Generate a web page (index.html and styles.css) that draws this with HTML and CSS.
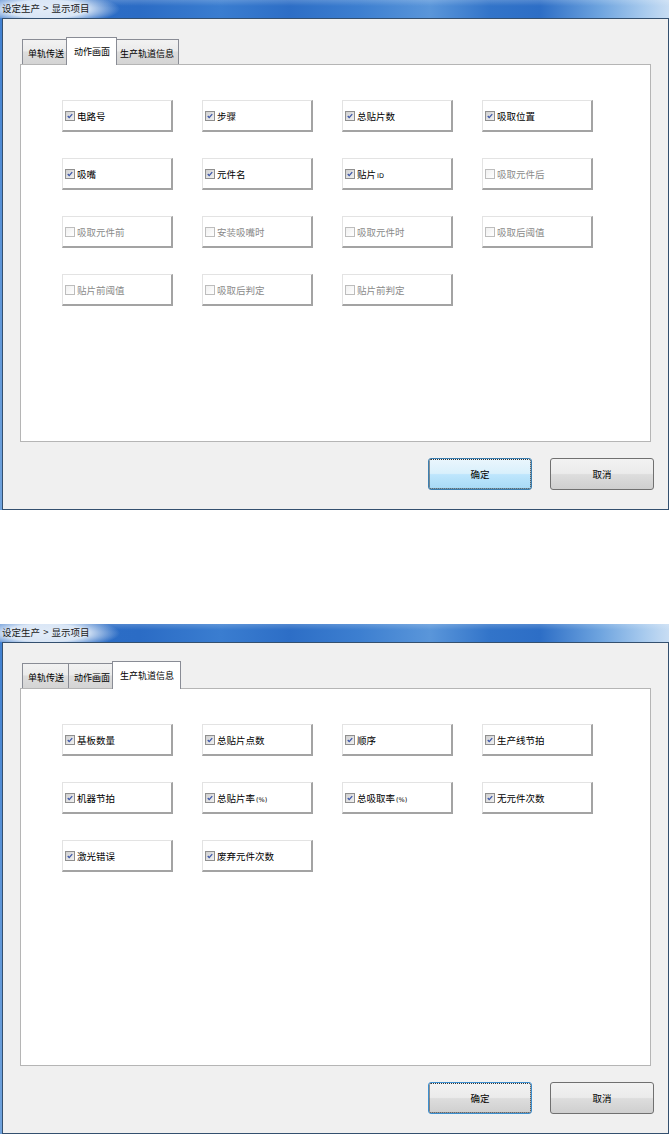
FILE: index.html
```html
<!DOCTYPE html>
<html lang="zh-CN">
<head>
<meta charset="utf-8">
<title>显示项目</title>
<link rel="stylesheet" href="styles.css">
</head>
<body>
<div class="window">
  <div class="titlebar"><span class="title">设定生产 <span class="sep">&gt;</span> 显示项目</span></div>
  <div class="client">
    <div class="tabs">
      <div class="tab">单轨传送</div>
      <div class="tab active">动作画面</div>
      <div class="tab">生产轨道信息</div>
    </div>
    <div class="panel">
      <div class="grid">
        <label class="item"><span class="cb on"><svg viewBox="0 0 10 10"><polyline points="2.2,5 4,7 7.8,2.6"/></svg></span><span class="lbl">电路号</span></label>
        <label class="item"><span class="cb on"><svg viewBox="0 0 10 10"><polyline points="2.2,5 4,7 7.8,2.6"/></svg></span><span class="lbl">步骤</span></label>
        <label class="item"><span class="cb on"><svg viewBox="0 0 10 10"><polyline points="2.2,5 4,7 7.8,2.6"/></svg></span><span class="lbl">总贴片数</span></label>
        <label class="item"><span class="cb on"><svg viewBox="0 0 10 10"><polyline points="2.2,5 4,7 7.8,2.6"/></svg></span><span class="lbl">吸取位置</span></label>
        <label class="item"><span class="cb on"><svg viewBox="0 0 10 10"><polyline points="2.2,5 4,7 7.8,2.6"/></svg></span><span class="lbl">吸嘴</span></label>
        <label class="item"><span class="cb on"><svg viewBox="0 0 10 10"><polyline points="2.2,5 4,7 7.8,2.6"/></svg></span><span class="lbl">元件名</span></label>
        <label class="item"><span class="cb on"><svg viewBox="0 0 10 10"><polyline points="2.2,5 4,7 7.8,2.6"/></svg></span><span class="lbl">贴片<span class="small">ID</span></span></label>
        <label class="item disabled"><span class="cb"></span><span class="lbl">吸取元件后</span></label>
        <label class="item disabled"><span class="cb"></span><span class="lbl">吸取元件前</span></label>
        <label class="item disabled"><span class="cb"></span><span class="lbl">安装吸嘴时</span></label>
        <label class="item disabled"><span class="cb"></span><span class="lbl">吸取元件时</span></label>
        <label class="item disabled"><span class="cb"></span><span class="lbl">吸取后阈值</span></label>
        <label class="item disabled"><span class="cb"></span><span class="lbl">贴片前阈值</span></label>
        <label class="item disabled"><span class="cb"></span><span class="lbl">吸取后判定</span></label>
        <label class="item disabled"><span class="cb"></span><span class="lbl">贴片前判定</span></label>
      </div>
    </div>
    <div class="actions">
      <button class="btn default">确定</button>
      <button class="btn">取消</button>
    </div>
  </div>
</div>

<div class="window">
  <div class="titlebar"><span class="title">设定生产 <span class="sep">&gt;</span> 显示项目</span></div>
  <div class="client">
    <div class="tabs">
      <div class="tab">单轨传送</div>
      <div class="tab">动作画面</div>
      <div class="tab active">生产轨道信息</div>
    </div>
    <div class="panel">
      <div class="grid">
        <label class="item"><span class="cb on"><svg viewBox="0 0 10 10"><polyline points="2.2,5 4,7 7.8,2.6"/></svg></span><span class="lbl">基板数量</span></label>
        <label class="item"><span class="cb on"><svg viewBox="0 0 10 10"><polyline points="2.2,5 4,7 7.8,2.6"/></svg></span><span class="lbl">总贴片点数</span></label>
        <label class="item"><span class="cb on"><svg viewBox="0 0 10 10"><polyline points="2.2,5 4,7 7.8,2.6"/></svg></span><span class="lbl">顺序</span></label>
        <label class="item"><span class="cb on"><svg viewBox="0 0 10 10"><polyline points="2.2,5 4,7 7.8,2.6"/></svg></span><span class="lbl">生产线节拍</span></label>
        <label class="item"><span class="cb on"><svg viewBox="0 0 10 10"><polyline points="2.2,5 4,7 7.8,2.6"/></svg></span><span class="lbl">机器节拍</span></label>
        <label class="item"><span class="cb on"><svg viewBox="0 0 10 10"><polyline points="2.2,5 4,7 7.8,2.6"/></svg></span><span class="lbl">总贴片率<span class="small">(%)</span></span></label>
        <label class="item"><span class="cb on"><svg viewBox="0 0 10 10"><polyline points="2.2,5 4,7 7.8,2.6"/></svg></span><span class="lbl">总吸取率<span class="small">(%)</span></span></label>
        <label class="item"><span class="cb on"><svg viewBox="0 0 10 10"><polyline points="2.2,5 4,7 7.8,2.6"/></svg></span><span class="lbl">无元件次数</span></label>
        <label class="item"><span class="cb on"><svg viewBox="0 0 10 10"><polyline points="2.2,5 4,7 7.8,2.6"/></svg></span><span class="lbl">激光错误</span></label>
        <label class="item"><span class="cb on"><svg viewBox="0 0 10 10"><polyline points="2.2,5 4,7 7.8,2.6"/></svg></span><span class="lbl">废弃元件次数</span></label>
      </div>
    </div>
    <div class="actions">
      <button class="btn focus">确定</button>
      <button class="btn">取消</button>
    </div>
  </div>
</div>
</body>
</html>
```
FILE: styles.css
```css
* { box-sizing: border-box; }

html, body { overflow: hidden; }

body {
  margin: 0;
  background: #ffffff;
  font-family: "Noto Sans CJK SC", "Liberation Sans", sans-serif;
  font-size: 9px;
  color: #000;
}

.window {
  width: 669px;
  height: 510px;
  display: flex;
  flex-direction: column;
  background: linear-gradient(180deg, #3f7fd0 0%, #5d95d8 50%, #6fa2dc 100%);
}

.window + .window {
  margin-top: 114px;
}

.titlebar {
  height: 18px;
  flex: none;
  display: flex;
  align-items: center;
  padding-left: 2px;
  background:
    radial-gradient(ellipse 74px 16px at 46px 9px, rgba(226,236,248,1) 0%, rgba(226,236,248,0.95) 55%, rgba(226,236,248,0) 100%),
    linear-gradient(180deg, rgba(255,255,255,0.18) 0, rgba(255,255,255,0) 6px),
    linear-gradient(90deg, #2e6fc7 0, #2b6cc5 140px, #3a7dd0 220px, #2d6ec6 290px, #3d7fd0 360px, #5a96da 430px, #3274c9 490px, #2d6ec6 540px, #6ea4df 600px, #a9cbee 645px, #c8ddf3 669px);
}

.title {
  color: #1b1b1b;
  font-size: 9.5px;
  line-height: 1;
  white-space: nowrap;
}

.sep {
  margin: 0 1px;
}

.client {
  flex: 1;
  margin-left: 2px;
  border: 1px solid #34506f;
  background: #f0f0f0;
  padding: 18px 0 0 17px;
  display: flex;
  flex-direction: column;
}

.tabs {
  display: flex;
  align-items: flex-end;
  height: 27px;
  padding-left: 2px;
}

.tab {
  height: 25px;
  padding: 2px 4px 0 5px;
  border: 1px solid #898c95;
  border-bottom: none;
  margin-left: -1px;
  background: linear-gradient(180deg, #f2f2f2 0%, #ebebeb 45%, #dddddd 50%, #d4d4d4 100%);
  display: flex;
  align-items: center;
  font-size: 9px;
  white-space: nowrap;
}

.tab:first-child { margin-left: 0; }

.tab.active {
  height: 28px;
  margin: 0 -2px -1px -3px;
  padding: 0 6px 0 7px;
  background: #ffffff;
  position: relative;
  z-index: 1;
}

.panel {
  width: 631px;
  height: 378px;
  border: 1px solid #b5b5b5;
  background: #ffffff;
  padding: 35px 0 0 41px;
}

.grid {
  display: grid;
  grid-template-columns: repeat(4, 111px);
  grid-auto-rows: 32px;
  column-gap: 29px;
  row-gap: 26px;
}

.item {
  display: flex;
  align-items: center;
  padding-left: 2px;
  padding-top: 1px;
  background: #ffffff;
  border-top: 1px solid #e3e3e3;
  border-left: 1px solid #e3e3e3;
  border-right: 2px solid #a3a3a3;
  border-bottom: 2px solid #a3a3a3;
  font-size: 9.5px;
  white-space: nowrap;
}

.cb {
  width: 10px;
  height: 10px;
  flex: none;
  border: 1px solid #bdbdbd;
  background: linear-gradient(135deg, #f0f0f0, #ffffff);
  margin-right: 2px;
  display: flex;
}

.cb.on {
  border-color: #8f8f8f;
  background: linear-gradient(135deg, #cfcfcf, #f2f2f2);
}

.cb svg {
  width: 8px;
  height: 8px;
  fill: none;
  stroke: #3b56a8;
  stroke-width: 1.6;
}

.item.disabled .lbl { color: #8a8a8a; }

.small {
  font-family: "DejaVu Sans", sans-serif;
  font-size: 6.5px;
  margin-left: 1px;
}

.actions {
  display: flex;
  justify-content: flex-end;
  gap: 18px;
  margin-top: 16px;
  padding-right: 14px;
}

.btn {
  width: 104px;
  height: 32px;
  border: 1px solid #707070;
  border-radius: 3px;
  background: linear-gradient(180deg, #f2f2f2 0%, #ebebeb 48%, #dddddd 52%, #cfcfcf 100%);
  font-family: "Noto Sans CJK SC", "Liberation Sans", sans-serif;
  font-size: 9.5px;
  color: #000;
  padding: 0;
}

.btn.default {
  border-color: #3c7fb1;
  background: linear-gradient(180deg, #eaf6fd 0%, #d9f0fc 48%, #bee6fd 52%, #a7d9f5 100%);
  outline: 1px dotted #333;
  outline-offset: -2px;
}

.btn.focus {
  border-color: #3c8fd0;
  outline: 1px dotted #333;
  outline-offset: -2px;
}
```
